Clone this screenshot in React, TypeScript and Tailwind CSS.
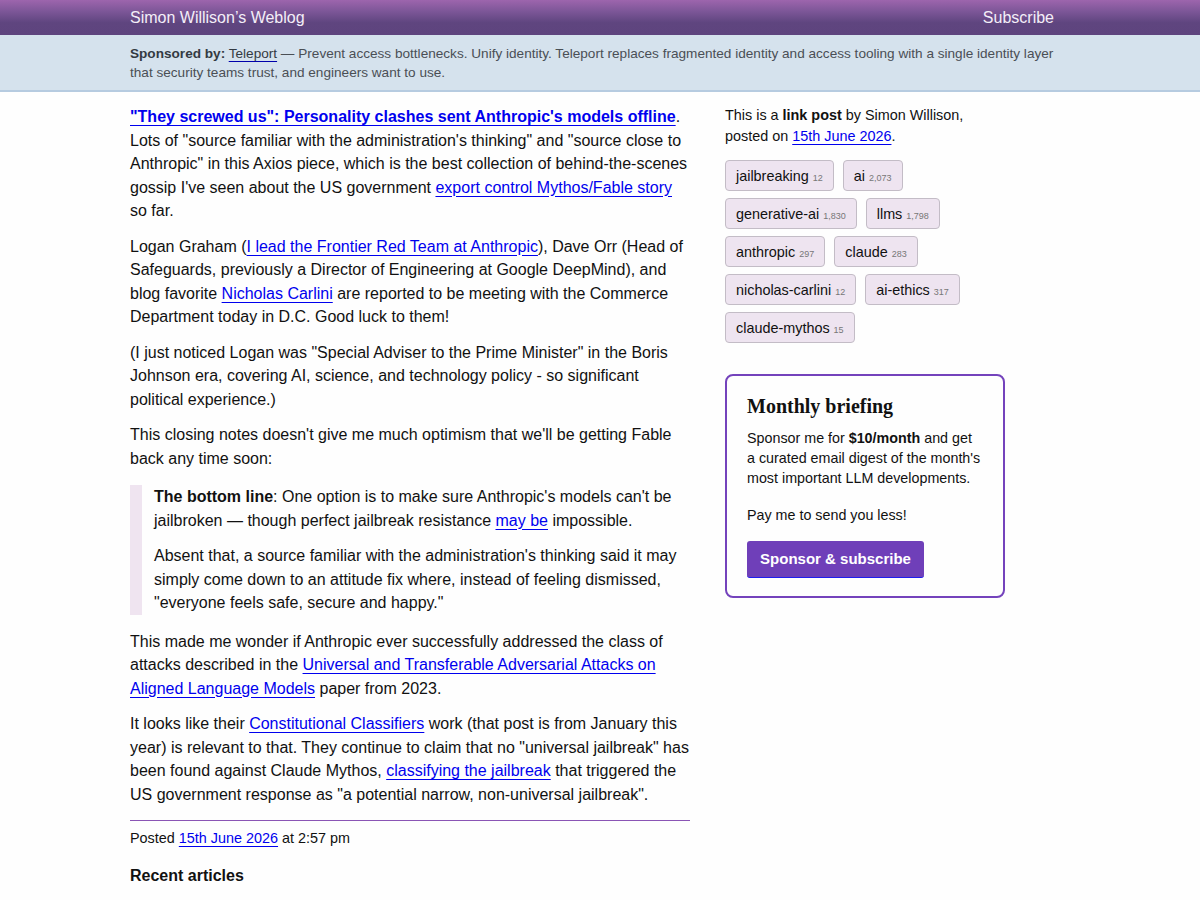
const A = ({ children, bold = false }: { children: React.ReactNode; bold?: boolean }) => (
  <a
    href="#"
    className={`text-[#0000ee] underline decoration-[#0000ee] underline-offset-[3px] ${bold ? 'font-bold' : ''}`}
  >
    {children}
  </a>
)

const tags: [string, string][] = [
  ['jailbreaking', '12'],
  ['ai', '2,073'],
  ['generative-ai', '1,830'],
  ['llms', '1,798'],
  ['anthropic', '297'],
  ['claude', '283'],
  ['nicholas-carlini', '12'],
  ['ai-ethics', '317'],
  ['claude-mythos', '15'],
]

export default function App() {
  return (
    <div className="min-h-screen bg-[#fefefe] text-[#111] font-['Liberation_Sans',Arial,sans-serif]">
      {/* Top bar */}
      <header className="h-[35px] bg-[linear-gradient(to_bottom,#9d65ad_0%,#7a5596_35%,#5f457f_65%,#5e447e_100%)]">
        <div className="w-[940px] mx-auto flex items-center justify-between h-full pr-4 text-[16px] text-[#f4eef8]">
          <span>Simon Willison’s Weblog</span>
          <span>Subscribe</span>
        </div>
      </header>

      {/* Sponsor banner */}
      <div className="bg-[#d5e2ed] border-b-2 border-[#b6cbe0]">
        <div className="w-[940px] mx-auto pt-[9px] pb-[8px] pr-3 text-[13.6px] leading-[19px] text-[#4a4f55]">
          <b className="text-[#333a42]">Sponsored by:</b>{' '}
          <a href="#" className="text-[#333a42] underline decoration-[#0000aa] underline-offset-[3px]">Teleport</a> — Prevent access bottlenecks. Unify identity. Teleport replaces fragmented identity and access tooling with a single identity layer that security teams trust, and engineers want to use.
        </div>
      </div>

      <div className="w-[940px] mx-auto flex gap-[35px] pt-[13px]">
        {/* Main column */}
        <main className="w-[560px] shrink-0 text-[16px] leading-[23.5px]">
          <p className="mb-3">
            <A bold>"They screwed us": Personality clashes sent Anthropic's models offline</A>. Lots of "source familiar with the administration's thinking" and "source close to Anthropic" in this Axios piece, which is the best collection of behind-the-scenes gossip I've seen about the US government <A>export control Mythos/Fable story</A> so far.
          </p>
          <p className="mb-3">
            Logan Graham (<A>I lead the Frontier Red Team at Anthropic</A>), Dave Orr (Head of Safeguards, previously a Director of Engineering at Google DeepMind), and blog favorite <A>Nicholas Carlini</A> are reported to be meeting with the Commerce Department today in D.C. Good luck to them!
          </p>
          <p className="mb-3">
            (I just noticed Logan was "Special Adviser to the Prime Minister" in the Boris Johnson era, covering AI, science, and technology policy - so significant political experience.)
          </p>
          <p className="mb-[15px]">
            This closing notes doesn't give me much optimism that we'll be getting Fable back any time soon:
          </p>
          <blockquote className="border-l-[12px] border-[#efe4f0] pl-3 mb-[15px]">
            <p className="mb-3">
              <b>The bottom line</b>: One option is to make sure Anthropic's models can't be jailbroken — though perfect jailbreak resistance <A>may be</A> impossible.
            </p>
            <p>
              Absent that, a source familiar with the administration's thinking said it may simply come down to an attitude fix where, instead of feeling dismissed, "everyone feels safe, secure and happy."
            </p>
          </blockquote>
          <p className="mb-3">
            This made me wonder if Anthropic ever successfully addressed the class of attacks described in the <A>Universal and Transferable Adversarial Attacks on Aligned Language Models</A> paper from 2023.
          </p>
          <p>
            It looks like their <A>Constitutional Classifiers</A> work (that post is from January this year) is relevant to that. They continue to claim that no "universal jailbreak" has been found against Claude Mythos, <A>classifying the jailbreak</A> that triggered the US government response as "a potential narrow, non-universal jailbreak".
          </p>
          <div className="mt-[14px] border-t border-t-[#8a55b5] pt-[6px] text-[14.4px] leading-[22px]">
            Posted <A>15th June 2026</A> at 2:57 pm
          </div>
          <h2 className="mt-[16px] text-[16px] font-bold leading-[22px]">Recent articles</h2>
        </main>

        {/* Sidebar */}
        <aside className="w-[280px] shrink-0">
          <p className="text-[14.4px] leading-[21px]">
            This is a <b>link post</b> by Simon Willison, posted on <A>15th June 2026</A>.
          </p>
          <div className="mt-[13px] flex flex-col gap-[7px]">
            {[0, 2, 4, 6, 8].map((i) => (
              <div key={i} className="flex gap-[9px]">
                {tags.slice(i, i + 2).map(([t, n]) => (
                  <span
                    key={t}
                    className="inline-flex items-baseline h-[31px] pt-[5px] px-[10px] rounded-[4px] bg-[#eee4f0] border border-[#c3bcc6] text-[14.4px] leading-[20px]"
                  >
                    {t}
                    <span className="ml-[4px] text-[9px] text-[#777]">{n}</span>
                  </span>
                ))}
              </div>
            ))}
          </div>

          <div className="mt-[31px] w-[280px] border-2 border-[#7443bc] rounded-[8px] pt-[16px] pb-[18px] pl-5 pr-[6px]">
            <h3 className="font-['Liberation_Serif','Times_New_Roman',serif] font-bold text-[20px] leading-[28px]">
              Monthly briefing
            </h3>
            <div className="text-[14.3px] leading-[20px]">
              <p className="mt-[8px]">
                Sponsor me for <b>$10/month</b> and get<br />
                a curated email digest of the month's most important LLM developments.
              </p>
              <p className="mt-[17px]">Pay me to send you less!</p>
            </div>
            <div className="mt-[16px]">
              <a
                href="#"
                className="inline-flex items-center justify-center w-[177px] h-[37px] rounded-[3px] bg-[#6f3fb9] border-b border-[#1d1df0] text-white font-bold text-[15px]"
              >
                Sponsor &amp; subscribe
              </a>
            </div>
          </div>
        </aside>
      </div>
    </div>
  )
}
